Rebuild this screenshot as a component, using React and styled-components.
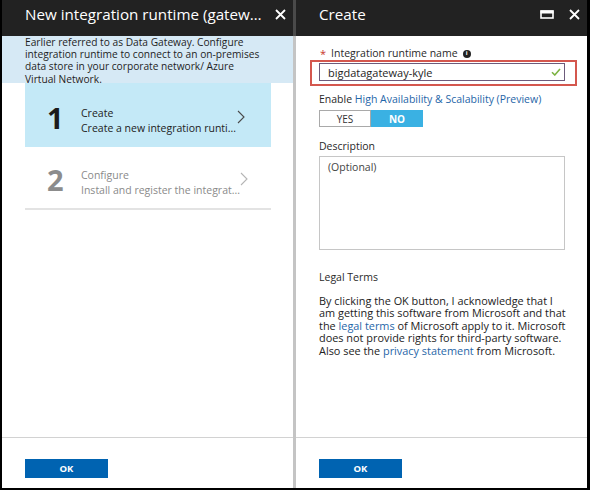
import React from "react";
import styled, { createGlobalStyle } from "styled-components";

const Global = createGlobalStyle`
  html, body { margin: 0; padding: 0; background: #fff; }
  body { font-family: "Open Sans", "Noto Sans", sans-serif; }
  * { box-sizing: border-box; }
`;

const Frame = styled.div`
  width: 590px;
  height: 490px;
  display: flex;
  border-left: 2px solid #000;
  border-right: 3px solid #000;
  border-bottom: 2px solid #000;
  background: #fff;
  overflow: hidden;
`;

const Panel = styled.section`
  width: 291px;
  display: flex;
  flex-direction: column;
`;

const Divider = styled.div`
  width: 3px;
  background: linear-gradient(#4a4a4a 0 36px, #c4c4c4 36px);
`;

const Header = styled.header`
  height: 36px;
  background: #222;
  color: #fff;
  display: flex;
  align-items: center;
  padding: 0 7px 8px 23px;
  gap: 10px;
`;

const Title = styled.h1`
  flex: 1;
  margin: 0;
  font-size: 15.2px;
  line-height: 20px;
  font-weight: 400;
  white-space: nowrap;
  overflow: hidden;
  text-overflow: ellipsis;
`;

const HeaderIcons = styled.div`
  display: flex;
  align-items: center;
  gap: 15px;
`;

const Body = styled.div`
  flex: 1;
  display: flex;
  flex-direction: column;
  padding: ${(p) => p.$pad || "0"};
  font-size: 10.5px;
  color: #222;
`;

const Notice = styled.p`
  margin: 0;
  height: 47px;
  padding: 0 10px 0 23px;
  background: #d6e9f5;
  line-height: 12.2px;
  font-size: 10.2px;
  color: #1e1e1e;
  white-space: nowrap;
`;

const Steps = styled.div`
  margin: 0 22px 0 23px;
`;

const Step = styled.div`
  height: ${(p) => (p.$active ? "64px" : "63px")};
  display: grid;
  grid-template-columns: 34px 1fr 16px;
  align-items: center;
  padding: 4px 18px 0 22px;
  background: ${(p) => (p.$active ? "#c4e9f7" : "#fff")};
  border-bottom: ${(p) => (p.$active ? "none" : "2px solid #e3e3e3")};
  color: ${(p) => (p.$active ? "#222" : "#8a8a8a")};
`;

const StepNum = styled.span`
  font-size: 29px;
  font-weight: 700;
  line-height: 1;
  color: ${(p) => (p.$active ? "#1b1b1b" : "#8c8c8c")};
`;

const StepText = styled.div`
  display: flex;
  flex-direction: column;
  gap: 2px;
  margin-top: 7px;
  font-size: 10.5px;
  line-height: 13px;
  white-space: nowrap;
`;

const ChevronWrap = styled.span`
  display: flex;
  margin-top: -1px;
`;

const Footer = styled.footer`
  height: 51px;
  border-top: 1px solid #d2d2d2;
  padding: 17px 23px 0;
`;

const OkButton = styled.button`
  width: 83px;
  height: 19px;
  border: none;
  background: #0063b1;
  color: #fff;
  font-family: "Open Sans", sans-serif;
  font-weight: 700;
  font-size: 9.5px;
  padding: 0;
`;

const Label = styled.div`
  font-size: 10.5px;
  line-height: 13px;
  color: #2a2a2a;
  display: flex;
  align-items: center;
  gap: 3px;
  margin-top: ${(p) => p.$mt || "0"};
  margin-bottom: ${(p) => p.$mb || "0"};
`;

const Req = styled.span`
  color: #c8352b;
  font-size: 11px;
  margin: 0 2px 0 1px;
`;

const InfoDot = styled.span`
  width: 8px;
  height: 8px;
  border-radius: 50%;
  background: #222;
  color: #fff;
  font-size: 6px;
  font-weight: 700;
  display: inline-flex;
  align-items: center;
  justify-content: center;
  margin-left: 2px;
`;

const Highlight = styled.div`
  margin: 0 -12px 0 -9px;
  padding: 1px 10px 3px 7px;
  border: 2px solid #d4574e;
`;

const Input = styled.div`
  height: 18px;
  border: 1px solid #6c5b7b;
  display: flex;
  align-items: center;
  justify-content: space-between;
  padding: 0 3px 0 8px;
  font-size: 11px;
  color: #1e1e1e;
`;

const Link = styled.span`
  color: #1f66a8;
`;

const Toggle = styled.div`
  display: flex;
  margin: 4px 0 0;
`;

const ToggleBtn = styled.div`
  width: 52px;
  height: 17px;
  display: flex;
  align-items: center;
  justify-content: center;
  font-size: 10px;
  font-weight: ${(p) => (p.$on ? 700 : 400)};
  background: ${(p) => (p.$on ? "#3ab1e3" : "#fff")};
  color: ${(p) => (p.$on ? "#fff" : "#333")};
  border: 1px solid ${(p) => (p.$on ? "#3ab1e3" : "#a9a9a9")};
`;

const TextArea = styled.div`
  height: 94px;
  border: 1px solid #c6c6c6;
  padding: 3px 8px;
  font-size: 10.5px;
  color: #444;
`;

const Para = styled.p`
  margin: 0;
  font-size: 10.9px;
  line-height: 12.4px;
  color: #222;
  white-space: nowrap;
`;

const Check = () => (
  <svg width="10" height="8" viewBox="0 0 10 8">
    <path d="M1 4.2 L3.8 7 L9 1" fill="none" stroke="#7cb342" strokeWidth="1.6" />
  </svg>
);

const CloseIcon = () => (
  <svg width="11" height="11" viewBox="0 0 11 11">
    <path d="M1 1 L10 10 M10 1 L1 10" stroke="#fff" strokeWidth="1.8" />
  </svg>
);

const MaxIcon = () => (
  <svg width="14" height="9" viewBox="0 0 14 9">
    <rect x="1" y="1" width="12" height="7" fill="none" stroke="#fff" strokeWidth="1.6" />
    <rect x="0.5" y="0.5" width="13" height="3" fill="#fff" />
  </svg>
);

const Chevron = ({ color }) => (
  <svg width="8" height="14" viewBox="0 0 8 14">
    <path d="M1 1 L7 7 L1 13" fill="none" stroke={color} strokeWidth="1.1" />
  </svg>
);

export default function App() {
  return (
    <>
      <Global />
      <Frame>
        <Panel>
          <Header>
            <Title>New integration runtime (gateway)</Title>
            <HeaderIcons>
              <CloseIcon />
            </HeaderIcons>
          </Header>
          <Body>
            <Notice>
              Earlier referred to as Data Gateway. Configure
              <br />
              integration runtime to connect to an on-premises
              <br />
              data store in your corporate network/ Azure
              <br />
              Virtual Network.
            </Notice>
            <Steps>
              <Step $active>
                <StepNum $active>1</StepNum>
                <StepText>
                  <span>Create</span>
                  <span>Create a new integration runti...</span>
                </StepText>
                <ChevronWrap>
                  <Chevron color="#4a4a4a" />
                </ChevronWrap>
              </Step>
              <Step>
                <StepNum>2</StepNum>
                <StepText>
                  <span>Configure</span>
                  <span>Install and register the integrat...</span>
                </StepText>
                <ChevronWrap>
                  <Chevron color="#b5b5b5" />
                </ChevronWrap>
              </Step>
            </Steps>
          </Body>
          <Footer>
            <OkButton>OK</OkButton>
          </Footer>
        </Panel>
        <Divider />
        <Panel>
          <Header>
            <Title>Create</Title>
            <HeaderIcons>
              <MaxIcon />
              <CloseIcon />
            </HeaderIcons>
          </Header>
          <Body $pad="11px 22px 0 23px">
            <Label>
              <Req>*</Req>Integration runtime name<InfoDot>i</InfoDot>
            </Label>
            <Highlight>
              <Input>
                bigdatagateway-kyle
                <Check />
              </Input>
            </Highlight>
            <Label $mt="7px">
              <span>
                Enable <Link>High Availability &amp; Scalability (Preview)</Link>
              </span>
            </Label>
            <Toggle>
              <ToggleBtn>YES</ToggleBtn>
              <ToggleBtn $on>NO</ToggleBtn>
            </Toggle>
            <Label $mt="13px" $mb="3px">
              Description
            </Label>
            <TextArea>(Optional)</TextArea>
            <Label $mt="21px" $mb="11px">
              Legal Terms
            </Label>
            <Para>
              By clicking the OK button, I acknowledge that I
              <br />
              am getting this software from Microsoft and that
              <br />
              the <Link>legal terms</Link> of Microsoft apply to it. Microsoft
              <br />
              does not provide rights for third-party software.
              <br />
              Also see the <Link>privacy statement</Link> from Microsoft.
            </Para>
          </Body>
          <Footer>
            <OkButton>OK</OkButton>
          </Footer>
        </Panel>
      </Frame>
    </>
  );
}
